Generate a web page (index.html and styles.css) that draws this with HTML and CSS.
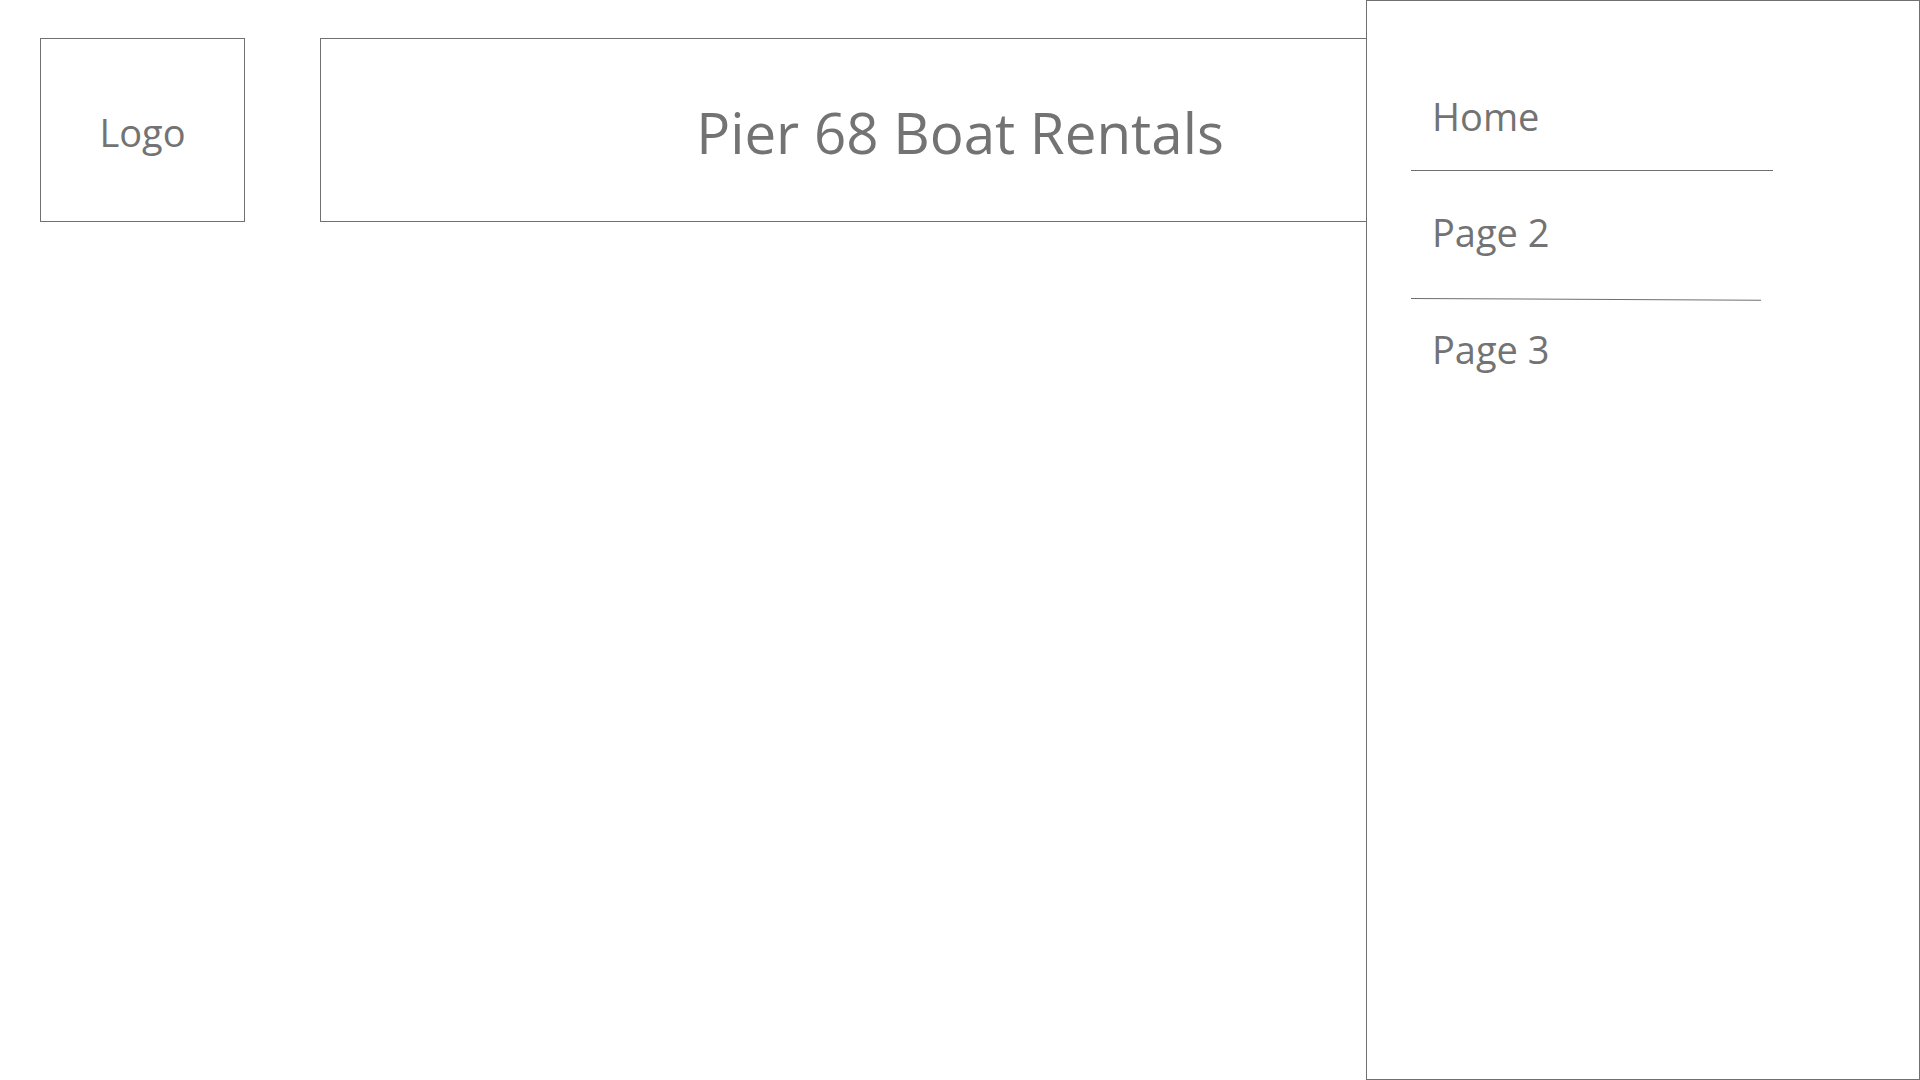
FILE: index.html
```html
<!DOCTYPE html>
<html lang="en">
<head>
<meta charset="utf-8">
<title>Pier 68 Boat Rentals</title>
<link rel="stylesheet" href="styles.css">
</head>
<body>
<header class="header">
  <div class="logo-box"><span class="logo-text">Logo</span></div>
  <div class="title-box"><h1 class="title">Pier 68 Boat Rentals</h1></div>
</header>
<aside class="sidebar">
  <nav class="nav">
    <a class="nav-item nav-home" href="#">Home</a>
    <div class="divider divider-1"></div>
    <a class="nav-item nav-page2" href="#">Page 2</a>
    <div class="divider divider-2"></div>
    <a class="nav-item nav-page3" href="#">Page 3</a>
  </nav>
</aside>
</body>
</html>
```
FILE: styles.css
```css
html, body {
  margin: 0;
  padding: 0;
  background: #ffffff;
  width: 1920px;
  height: 1080px;
  overflow: hidden;
  font-family: "Open Sans", "Noto Sans", sans-serif;
  color: #737373;
}

.header {
  display: flex;
  align-items: flex-start;
  gap: 75px;
  padding: 38px 0 0 40px;
}

.logo-box {
  box-sizing: border-box;
  width: 205px;
  height: 184px;
  border: 1px solid #707070;
  display: flex;
  align-items: center;
  justify-content: center;
  padding-top: 4px;
}

.logo-text {
  font-size: 38px;
  line-height: 52px;
}

.title-box {
  box-sizing: border-box;
  width: 1280px;
  height: 184px;
  border: 1px solid #707070;
  display: flex;
  align-items: center;
  justify-content: center;
  padding-top: 5px;
}

.title {
  margin: 0;
  font-weight: 400;
  font-size: 56.5px;
  line-height: 80px;
}

.sidebar {
  position: absolute;
  top: 0;
  left: 1366px;
  box-sizing: border-box;
  width: 554px;
  height: 1080px;
  background: #ffffff;
  border: 1px solid #707070;
}

.nav {
  display: flex;
  flex-direction: column;
  align-items: flex-start;
  padding: 89px 0 0 44px;
}

.nav-item {
  display: block;
  padding-left: 21px;
  font-size: 38px;
  line-height: 52px;
  color: #737373;
  text-decoration: none;
}

.divider {
  height: 0;
  border-top: 1px solid #707070;
}

.divider-1 {
  width: 362px;
  margin: 28px 0 35px;
}

.divider-2 {
  width: 350px;
  margin: 40px 0 24px;
  transform-origin: left center;
  transform: rotate(0.3deg);
}
```
